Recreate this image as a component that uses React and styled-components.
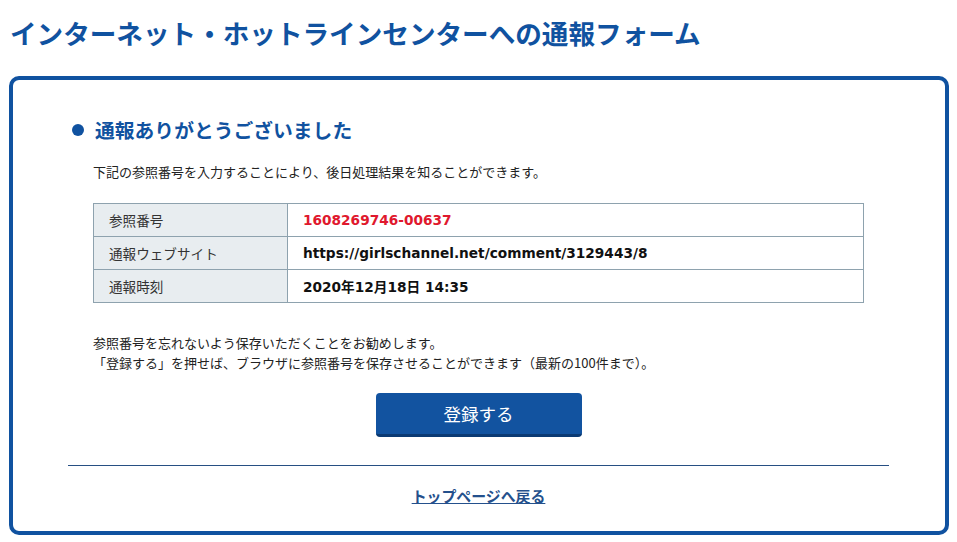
import React from "react";
import styled, { createGlobalStyle } from "styled-components";

const Global = createGlobalStyle`
  html, body { margin: 0; padding: 0; background: #fff; }
  body {
    font-family: "Noto Sans CJK JP", "Noto Sans", sans-serif;
    color: #222;
  }
`;

const BLUE = "#1052a0";

const Page = styled.div`
  width: 957px;
  height: 542px;
  overflow: hidden;
`;

const Title = styled.h1`
  margin: 0;
  padding: 14px 0 0 10px;
  height: 62px;
  box-sizing: border-box;
  font-size: 26.6px;
  line-height: 38px;
  font-weight: 700;
  color: ${BLUE};
  white-space: nowrap;
`;

const Box = styled.div`
  margin: 14px 8px 0 9px;
  height: 459px;
  box-sizing: border-box;
  border: 4px solid ${BLUE};
  border-radius: 10px;
  padding: 35px 56px 0 55px;
`;

const Section = styled.div`
  padding: 0 25px;
`;

const Heading = styled.h2`
  margin: 0 0 0 -21px;
  display: flex;
  align-items: center;
  gap: 11px;
  font-size: 19.8px;
  line-height: 30px;
  font-weight: 700;
  color: ${BLUE};
  &::before {
    content: "";
    width: 12px;
    height: 12px;
    border-radius: 50%;
    background: ${BLUE};
  }
`;

const Text = styled.p`
  margin: ${(p) => p.$m || "0"};
  font-size: 13px;
  line-height: 20px;
  color: #222;
  white-space: nowrap;
`;

const Table = styled.table`
  width: 771px;
  border-collapse: collapse;
  margin-top: 21px;
`;

const Th = styled.th`
  width: 194px;
  box-sizing: border-box;
  background: #e8edf0;
  border: 1px solid #8ea2ae;
  height: 32px;
  padding: 0 0 0 15px;
  text-align: left;
  font-size: 13.6px;
  font-weight: 400;
  color: #333;
`;

const Td = styled.td`
  border: 1px solid #8ea2ae;
  height: 32px;
  padding: 0 0 0 15px;
  font-family: "DejaVu Sans", "Noto Sans CJK JP", sans-serif;
  font-size: 13.7px;
  font-weight: 700;
  color: ${(p) => (p.$red ? "#e0182d" : "#111")};
`;

const ButtonRow = styled.div`
  display: flex;
  justify-content: center;
  margin-top: 20px;
`;

const Button = styled.button`
  width: 206px;
  height: 44px;
  border: none;
  border-bottom: 3px solid #0b3a73;
  border-radius: 4px;
  background: #1253a0;
  color: #fff;
  font-family: "Noto Sans CJK JP", sans-serif;
  font-size: 17.5px;
  padding: 0;
  cursor: pointer;
`;

const Divider = styled.hr`
  margin: 28px 0 0;
  border: none;
  border-top: 1px solid #274f83;
`;

const LinkRow = styled.div`
  display: flex;
  justify-content: center;
  margin-top: 19px;
`;

const BackLink = styled.a`
  font-size: 14.9px;
  font-weight: 700;
  color: #24508c;
  text-decoration: underline;
  line-height: 22px;
`;

export default function App() {
  return (
    <Page>
      <Global />
      <Title>インターネット・ホットラインセンターへの通報フォーム</Title>
      <Box>
        <Section>
          <Heading>通報ありがとうございました</Heading>
          <Text $m="17px 0 0">
            下記の参照番号を入力することにより、後日処理結果を知ることができます。
          </Text>
          <Table>
            <tbody>
              <tr>
                <Th>参照番号</Th>
                <Td $red>1608269746-00637</Td>
              </tr>
              <tr>
                <Th>通報ウェブサイト</Th>
                <Td>https://girlschannel.net/comment/3129443/8</Td>
              </tr>
              <tr>
                <Th>通報時刻</Th>
                <Td>2020年12月18日 14:35</Td>
              </tr>
            </tbody>
          </Table>
          <Text $m="30px 0 0">参照番号を忘れないよう保存いただくことをお勧めします。</Text>
          <Text>
            「登録する」を押せば、ブラウザに参照番号を保存させることができます（最新の100件まで）。
          </Text>
          <ButtonRow>
            <Button>登録する</Button>
          </ButtonRow>
        </Section>
        <Divider />
        <LinkRow>
          <BackLink href="#">トップページへ戻る</BackLink>
        </LinkRow>
      </Box>
    </Page>
  );
}
